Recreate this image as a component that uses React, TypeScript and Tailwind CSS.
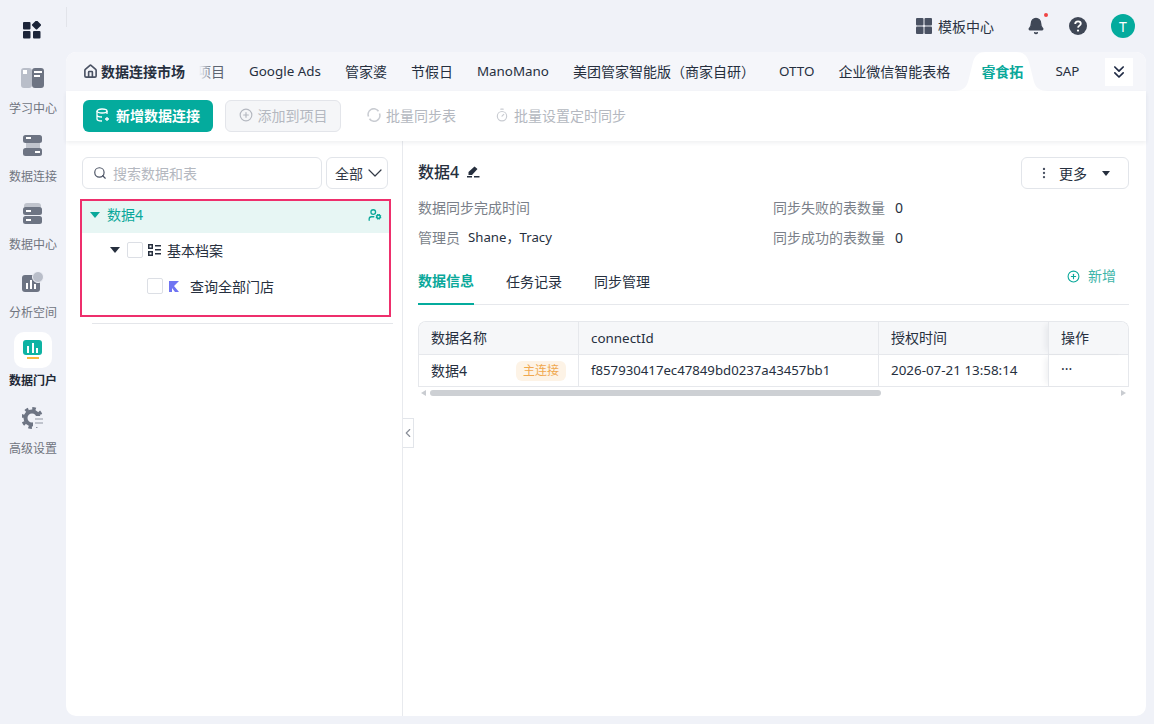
import { Bell, ChevronDown, ChevronLeft, ChevronsDown, CirclePlus, EllipsisVertical, House, Search, Timer, UserCog } from "lucide-react"

const FONT = "[font-family:'Noto_Sans','Noto_Sans_CJK_SC',sans-serif]"

function NavIcon({ kind }: { kind: string }) {
  if (kind === "learn") {
    return (
      <svg width="24" height="20" viewBox="0 0 24 20">
        <rect x="0" y="0" width="11" height="20" rx="3" fill="#b9bec9" />
        <rect x="11" y="0" width="12" height="20" rx="3" fill="#6d7483" />
        <rect x="2" y="2" width="4" height="4" fill="#fff" />
        <rect x="13" y="3" width="8" height="2" fill="#fff" />
        <rect x="13" y="7" width="6" height="2" fill="#fff" />
      </svg>
    )
  }
  if (kind === "connect") {
    return (
      <svg width="20" height="22" viewBox="0 0 20 22">
        <rect x="0" y="0" width="19" height="8" rx="2.5" fill="#6d7483" />
        <rect x="3" y="8" width="14" height="5" fill="#c0c4cd" />
        <rect x="0" y="13" width="19" height="8" rx="2.5" fill="#6d7483" />
        <rect x="3" y="2" width="5" height="2" fill="#fff" />
        <rect x="12" y="16" width="5" height="2" fill="#fff" />
      </svg>
    )
  }
  if (kind === "center") {
    return (
      <svg width="20" height="22" viewBox="0 0 20 22">
        <rect x="1" y="0" width="17" height="6" rx="3" fill="#c0c4cd" />
        <rect x="0" y="4" width="19" height="8" rx="2.5" fill="#6d7483" />
        <rect x="0" y="13" width="19" height="8" rx="2.5" fill="#6d7483" />
        <rect x="3" y="7" width="5" height="2" fill="#fff" />
        <rect x="3" y="16" width="5" height="2" fill="#fff" />
      </svg>
    )
  }
  if (kind === "analysis") {
    return (
      <svg width="22" height="22" viewBox="0 0 22 22">
        <rect x="0" y="4" width="18" height="17" rx="3" fill="#6d7483" />
        <circle cx="16" cy="6" r="5.500" fill="#b9bec9" stroke="#f0f2f8" />
        <rect x="4" y="12" width="2" height="6" fill="#fff" />
        <rect x="8" y="9" width="2" height="9" fill="#fff" />
        <rect x="12" y="13" width="2" height="5" fill="#fff" />
      </svg>
    )
  }
  if (kind === "portal") {
    return (
      <svg width="20" height="20" viewBox="0 0 20 20">
        <rect x="0" y="0" width="19" height="15" rx="3" fill="#0eb3a3" />
        <rect x="4" y="6" width="2" height="7" fill="#fff" />
        <rect x="9" y="3" width="2" height="10" fill="#fff" />
        <rect x="13" y="8" width="2" height="5" fill="#fff" />
        <rect x="4" y="17" width="12" height="2" fill="#f6b83c" />
      </svg>
    )
  }
  return (
    <svg width="22" height="22" viewBox="0 0 22 22" fill="none">
      <circle cx="10" cy="11" r="6.500" stroke="#6d7483" strokeWidth="4" />
      <circle cx="10" cy="11" r="9.500" stroke="#6d7483" strokeWidth="3" strokeDasharray="3.500 3.960" />
      <rect x="11" y="9" width="11" height="11" fill="#f0f2f8" />
      <rect x="13" y="11" width="8" height="2" fill="#c0c4cd" />
      <rect x="13" y="15" width="8" height="2" fill="#c0c4cd" />
    </svg>
  )
}

const navItems = [
  { kind: "learn", label: "学习中心" },
  { kind: "connect", label: "数据连接" },
  { kind: "center", label: "数据中心" },
  { kind: "analysis", label: "分析空间" },
  { kind: "portal", label: "数据门户", active: true },
  { kind: "gear", label: "高级设置" },
]

const tabs = [
  { name: "Google Ads", latin: true },
  { name: "管家婆" },
  { name: "节假日" },
  { name: "ManoMano", latin: true },
  { name: "美团管家智能版（商家自研）" },
  { name: "OTTO", latin: true },
  { name: "企业微信智能表格" },
]

function Sidebar() {
  return (
    <div className="flex w-[66px] shrink-0 flex-col items-center">
      <div className="flex h-[60px] items-center justify-center pr-[2px]">
        <svg width="18" height="18" viewBox="0 0 18 18" fill="#1b2438">
          <rect x="0" y="1" width="7.500" height="7.500" rx="1" />
          <rect x="10" y="0.500" width="7" height="7" rx="1" transform="rotate(45 13.500 4)" />
          <rect x="0" y="10" width="7.500" height="7.500" rx="1" />
          <rect x="10" y="10" width="7.500" height="7.500" rx="1" />
        </svg>
      </div>
      <div className="flex w-full flex-col items-center">
        {navItems.map((item) => (
          <div key={item.label} className="flex h-[68px] w-full flex-col items-center">
            <div className={`flex h-[36px] w-[38px] items-center justify-center rounded-[10px] ${item.active ? "bg-white" : ""}`}>
              <NavIcon kind={item.kind} />
            </div>
            <span className={`mt-[4px] text-[12px] leading-[18px] ${item.active ? "font-bold text-[#1f2937]" : "text-[#70757f]"}`}>
              {item.label}
            </span>
          </div>
        ))}
      </div>
    </div>
  )
}

function TabBar() {
  return (
    <div className="flex h-[39px] items-center whitespace-nowrap rounded-t-[10px] bg-[#f5f6fa] pl-[17px] text-[14px] text-[#262f3e]">
      <House size={15} strokeWidth={2.6} className="shrink-0 text-[#4a5263]" />
      <span className="ml-[3px] w-[98px] shrink-0 font-bold">数据连接市场</span>
      <span className="relative flex w-[26px] shrink-0 justify-end overflow-hidden text-[#5d6471]">
        <span className="shrink-0">项目</span>
        <span className="absolute inset-y-0 left-0 w-[14px] bg-gradient-to-r from-[#f5f6fa] to-transparent" />
      </span>
      <div className="ml-[24px] flex items-center gap-[24px]">
        {tabs.map((tab) => (
          <span key={tab.name} className={tab.latin ? "text-[13.4px]" : ""}>
            {tab.name}
          </span>
        ))}
      </div>
      <div className="relative ml-[16px] flex h-[39px] w-[72px] items-center justify-center self-end font-bold text-[#0aa89a]">
        <svg className="absolute left-[-12px] top-0" width="94" height="39" viewBox="0 0 94 39" fill="#fff">
          <path d="M0 39C8 39 12 36 14 30L19 10C21 3 25 0 32 0H62C69 0 73 3 75 10L80 30C82 36 86 39 94 39Z" />
        </svg>
        <span className="relative">睿食拓</span>
      </div>
      <span className="ml-[17px] text-[13.4px]">SAP</span>
      <div className="ml-[26px] flex h-[28px] w-[28px] items-center justify-center bg-white">
        <ChevronsDown size={20} strokeWidth={2} className="text-[#1f2a44]" />
      </div>
    </div>
  )
}

function Toolbar() {
  return (
    <div className="relative flex h-[50px] items-center gap-[12px] bg-white pl-[17px] text-[14px] shadow-[0_2px_4px_rgba(30,40,70,0.07)]">
      <button className="flex h-[32px] w-[130px] items-center justify-center gap-[6px] rounded-[6px] bg-[#04ab9d] pb-[2px] font-bold text-white">
        <svg width="14" height="14" viewBox="0 0 14 14" fill="none" stroke="#fff" strokeWidth="1.300">
          <ellipse cx="6" cy="3" rx="5" ry="2" />
          <path d="M1 3v8c0 1 2 2 5 2M1 7c0 1 2 2 5 2M11 3v3M11 9v4M9 11h4" />
        </svg>
        新增数据连接
      </button>
      <button className="flex h-[32px] w-[116px] items-center justify-center gap-[5px] rounded-[6px] border border-[#e3e5ea] bg-[#f5f6f8] pb-[2px] text-[#b4b8c0]">
        <CirclePlus size={14} />
        添加到项目
      </button>
      <span className="ml-[14px] flex -translate-y-px items-center gap-[5px] text-[#b4b8c0]">
        <svg width="14" height="14" viewBox="0 0 14 14" fill="none" stroke="#c9ccd2" strokeWidth="1.600">
          <path d="M1.500 8.500A5.700 5.700 0 0 1 11.500 3.200M12.500 5.500A5.700 5.700 0 0 1 2.500 10.800" />
        </svg>
        批量同步表
      </span>
      <span className="ml-[27px] flex -translate-y-px items-center gap-[5px] text-[#b4b8c0]">
        <Timer size={14} className="text-[#c9ccd2]" />
        批量设置定时同步
      </span>
    </div>
  )
}

function LeftPanel() {
  return (
    <div className="w-[337px] shrink-0 border-r border-[#e8eaee] pl-[16px] pr-[9px] pt-[16px] text-[14px]">
      <div className="flex gap-[4px]">
        <div className="flex h-[32px] w-[240px] items-center gap-[6px] rounded-[6px] border border-[#e2e5ea] px-[10px] text-[#b4b8c0]">
          <Search size={14} className="text-[#4a5263]" />
          搜索数据和表
        </div>
        <div className="flex h-[32px] w-[62px] items-center rounded-[6px] border border-[#e2e5ea] pl-[8px] text-[#333a47]">
          全部
          <ChevronDown size={24} strokeWidth={1.2} />
        </div>
      </div>
      <div className="mt-[10px] h-[118px] w-[311px] -translate-x-[2px] border-2 border-[#ee2f6c]">
        <div className="flex h-[32px] items-center justify-between bg-[#e7f6f4] pb-[5px] pl-[8px] pr-[7px] text-[#0aa89a]">
          <div className="flex items-center gap-[7px]">
            <span className="h-0 w-0 border-x-[5px] border-t-[6px] border-x-transparent border-t-[#0aa89a]" />
            数据4
          </div>
          <UserCog size={14} strokeWidth={2.2} />
        </div>
        <div className="flex h-[36px] items-center pb-[2px] pl-[28px] text-[#262f3e]">
          <span className="h-0 w-0 border-x-[5px] border-t-[6px] border-x-transparent border-t-[#262f3e]" />
          <span className="ml-[7px] h-[16px] w-[16px] rounded-[2px] border border-[#dcdfe5] bg-white" />
          <svg className="ml-[5px]" width="13" height="13" viewBox="0 0 13 13" fill="#262f3e">
            <path d="M0 0h5v5H0zM1.500 1.500v2h2v-2zM0 7h5v5H0zM1.500 8.500v2h2v-2z" fillRule="evenodd" />
            <path d="M7 1h6v1.500H7zM7 5h6v1.500H7zM7 9h6v1.500H7z" />
          </svg>
          <span className="ml-[6px]">基本档案</span>
        </div>
        <div className="flex h-[36px] items-center pb-[2px] pl-[65px] text-[#262f3e]">
          <span className="h-[16px] w-[16px] rounded-[2px] border border-[#dcdfe5] bg-white" />
          <svg className="ml-[6px]" width="11" height="11" viewBox="0 0 11 11">
            <path d="M0 0h10L5 5l5 6H6L3 7v4H0z" fill="#6f74f2" />
          </svg>
          <span className="ml-[10px]">查询全部门店</span>
        </div>
      </div>
      <div className="ml-[10px] mt-[6px] h-px bg-[#e4e6ea]" />
    </div>
  )
}

function RightPanel() {
  return (
    <div className="min-w-0 flex-1 pl-[15px] pr-[17px] pt-[16px] text-[14px] text-[#262f3e]">
      <div className="flex h-[32px] items-center justify-between">
        <div className="flex items-center gap-[7px] pb-[3px] text-[16px] font-medium">
          数据4
          <svg width="14" height="12" viewBox="0 0 14 12" fill="#262f3e">
            <path d="M8.500 0.500l3 2.500-5.500 6H2.500v-3zM8 10h5.500v1.500H8zM1 10h5v1.500H1z" />
          </svg>
        </div>
        <div className="flex h-[32px] w-[108px] items-center rounded-[6px] border border-[#e2e5ea] pl-[15px]">
          <EllipsisVertical size={14} className="text-[#4a5263]" />
          <span className="ml-[8px]">更多</span>
          <span className="ml-[15px] h-0 w-0 border-x-[4px] border-t-[5px] border-x-transparent border-t-[#262f3e]" />
        </div>
      </div>
      <div className="mt-[3px] grid grid-cols-[355px_1fr] text-[#7a7f89]">
        <div className="flex h-[30px] items-center">数据同步完成时间</div>
        <div className="flex h-[30px] items-center">
          同步失败的表数量<span className="ml-[10px] text-[#262f3e]">0</span>
        </div>
        <div className="flex h-[30px] items-center">
          管理员<span className="ml-[8px] pt-[2px] text-[13.2px] text-[#262f3e]">Shane，Tracy</span>
        </div>
        <div className="flex h-[30px] items-center">
          同步成功的表数量<span className="ml-[10px] text-[#262f3e]">0</span>
        </div>
      </div>
      <div className="mt-[8px] flex h-[45px] items-stretch justify-between border-b border-[#e6e8ec]">
        <div className="flex gap-[32px]">
          <span className="-mb-px flex items-center border-b-2 border-[#04ab9d] pb-[2px] font-bold text-[#0aa89a]">数据信息</span>
          <span className="flex items-center pb-[2px]">任务记录</span>
          <span className="flex items-center pb-[2px]">同步管理</span>
        </div>
        <div className="flex items-start gap-[8px] pr-[13px] pt-[5px] text-[#3db5a9]">
          <CirclePlus size={13} className="mt-[5px] text-[#0aa89a]" />
          新增
        </div>
      </div>
      <div className="mt-[16px] w-[711px] overflow-hidden rounded-t-[8px] border border-b-0 border-[#e6e8ec]">
        <div className="grid h-[33px] grid-cols-[160px_300px_169px_1fr] items-stretch border-b border-[#e6e8ec] bg-[#f6f7f9]">
          <div className="flex items-center border-r border-[#e6e8ec] pb-[2px] pl-[12px]">数据名称</div>
          <div className="flex items-center border-r border-[#e6e8ec] pl-[12px] text-[13.4px]">connectId</div>
          <div className="flex items-center pb-[2px] pl-[12px]">授权时间</div>
          <div className="flex items-center border-l border-[#e6e8ec] pb-[2px] pl-[12px] shadow-[-5px_0_6px_-3px_rgba(30,40,70,0.08)]">操作</div>
        </div>
        <div className="grid h-[32px] grid-cols-[160px_300px_169px_1fr] items-stretch border-b border-[#e6e8ec]">
          <div className="flex items-center justify-between border-r border-[#e6e8ec] pl-[12px] pr-[12px]">
            数据4
            <span className="flex h-[20px] w-[50px] items-center justify-center rounded-[6px] bg-[#fdf3e6] text-[12px] text-[#f0a84e]">主连接</span>
          </div>
          <div className="flex items-center border-r border-[#e6e8ec] pl-[12px] text-[13.2px]">f857930417ec47849bd0237a43457bb1</div>
          <div className="flex items-center pl-[12px] text-[13.4px]">2026-07-21 13:58:14</div>
          <div className="flex items-center border-l border-[#e6e8ec] pb-[4px] pl-[12px] shadow-[-5px_0_6px_-3px_rgba(30,40,70,0.08)]">···</div>
        </div>
      </div>
      <div className="flex h-[11px] w-[711px] items-center">
        <span className="ml-[3px] h-0 w-0 border-y-[3.5px] border-r-[5px] border-y-transparent border-r-[#c9ccd1]" />
        <span className="ml-[4px] h-[6px] w-[451px] rounded-full bg-[#cdd0d4]" />
        <span className="ml-auto mr-[3px] h-0 w-0 border-y-[3.5px] border-l-[5px] border-y-transparent border-l-[#c9ccd1]" />
      </div>
    </div>
  )
}

export default function App() {
  return (
    <div className={`flex h-[724px] w-[1154px] overflow-hidden bg-[#f0f2f8] ${FONT}`}>
      <Sidebar />
      <div className="flex min-w-0 flex-1 flex-col">
        <div className="flex h-[52px] items-center pr-[19px] text-[14px] text-[#2a3242]">
          <div className="h-[20px] w-px -translate-y-[9px] bg-[#e2e4ea]" />
          <div className="ml-auto flex items-center gap-[6px]">
            <svg width="16" height="16" viewBox="0 0 16 16" fill="#4a5263">
              <rect x="0" y="0" width="7.500" height="7.500" rx="1" />
              <rect x="8.500" y="0" width="7.500" height="7.500" rx="1" />
              <rect x="0" y="8.500" width="7.500" height="7.500" rx="1" />
              <rect x="8.500" y="8.500" width="7.500" height="7.500" rx="1" />
            </svg>
            模板中心
          </div>
          <div className="relative ml-[33px]">
            <Bell size={18} fill="#3f4756" className="text-[#3f4756]" />
            <span className="absolute -right-[3px] -top-[4px] h-[4px] w-[4px] rounded-full bg-[#ef4444]" />
          </div>
          <svg className="ml-[24px]" width="18" height="18" viewBox="0 0 18 18" fill="none">
            <circle cx="9" cy="9" r="9" fill="#3f4756" />
            <path d="M6.200 7c0-1.700 1.300-2.700 2.900-2.700 1.500 0 2.700 1 2.700 2.400 0 1.800-2.600 2-2.800 4" stroke="#fff" strokeWidth="1.800" />
            <circle cx="9" cy="13.600" r="1.100" fill="#fff" />
          </svg>
          <div className="ml-[24px] flex h-[24px] w-[24px] items-center justify-center rounded-full bg-[#04ab9d] text-[14px] text-white">T</div>
        </div>
        <div className="relative mb-[8px] mr-[8px] flex min-h-0 flex-1 flex-col rounded-[10px] bg-white">
          <TabBar />
          <Toolbar />
          <div className="flex min-h-0 flex-1">
            <LeftPanel />
            <RightPanel />
          </div>
          <div className="absolute left-[337px] top-[366px] flex h-[30px] w-[11px] items-center justify-center border border-l-0 border-[#e2e5ea] bg-white text-[#8a8f99]">
            <ChevronLeft size={14} className="shrink-0" />
          </div>
        </div>
      </div>
    </div>
  )
}
